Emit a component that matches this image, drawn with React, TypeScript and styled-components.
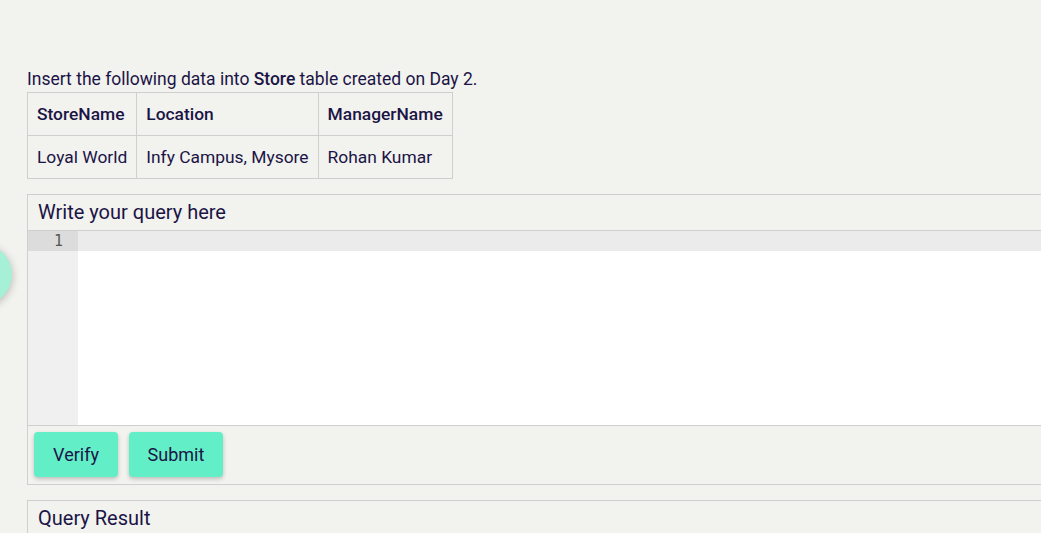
import React from "react";
import styled, {createGlobalStyle} from "styled-components";

const GlobalStyle = createGlobalStyle`
  html, body {
    margin: 0;
    padding: 0;
    background: #f2f2ee;
    overflow: hidden;
  }
  body {
    font-family: Roboto, "Liberation Sans", sans-serif;
    color: #1b1446;
  }
`

const Page = styled.div`
  position: relative;
  width: 1041px;
  height: 533px;
  overflow: hidden;
  padding: 67px 0 0 27px;
  box-sizing: border-box;
`

const FloatingBubble = styled.div`
  position: absolute;
  left: -49px;
  top: 244px;
  width: 61px;
  height: 61px;
  border-radius: 50%;
  background: #a6f0d8;
  box-shadow: 0 2px 8px rgba(0, 0, 0, 0.25);
`

const Intro = styled.p`
  margin: 0 0 1px;
  font-size: 17.5px;
  line-height: 24px;
  b {
    font-weight: 500;
  }
`

const DataTable = styled.table`
  border-collapse: collapse;
  font-size: 17.4px;
  margin-bottom: 15px;
  th, td {
    border: 1px solid #cfcfcf;
    padding: 0 9px;
    height: 42px;
    text-align: left;
  }
  th {
    font-weight: 500;
  }
`

const Panel = styled.section`
  width: 1100px;
  border: 1px solid #cfcfcf;
  box-sizing: border-box;
  margin-bottom: 15px;
`

const PanelTitle = styled.div`
  font-size: 20px;
  line-height: 35px;
  padding: 0 10px;
  border-bottom: 1px solid #cfcfcf;
`

const Editor = styled.div`
  display: flex;
  height: 194px;
  background: #fff;
`

const Gutter = styled.div`
  width: 50px;
  background: #f0f0f0;
  flex-shrink: 0;
`

const Lines = styled.div`
  flex: 1;
`

const LineNumber = styled.div<{active?: boolean}>`
  height: 20px;
  line-height: 20px;
  padding-right: 15px;
  text-align: right;
  font-family: "DejaVu Sans Mono", "Liberation Mono", monospace;
  font-size: 15px;
  color: #555;
  background: ${p => (p.active ? "#dcdcdc" : "transparent")};
`

const CodeLine = styled.div<{active?: boolean}>`
  height: 20px;
  background: ${p => (p.active ? "#ebebeb" : "transparent")};
`

const ButtonRow = styled.div`
  display: flex;
  gap: 11px;
  padding: 6px 6px 7px;
  border-top: 1px solid #cfcfcf;
`

const ActionButton = styled.button<{w: number}>`
  width: ${p => p.w}px;
  height: 45px;
  border: none;
  border-radius: 4px;
  background: #62efc8;
  color: #1b1446;
  font-family: Roboto, "Liberation Sans", sans-serif;
  font-size: 18px;
  box-shadow: 0 2px 4px rgba(0, 0, 0, 0.22);
  cursor: pointer;
`

const App = () => {
    return (
        <>
            <GlobalStyle />
            <Page>
                <FloatingBubble />
                <Intro>Insert the following data into <b>Store</b> table created on Day 2.</Intro>
                <DataTable>
                    <thead>
                        <tr>
                            <th>StoreName</th>
                            <th>Location</th>
                            <th>ManagerName</th>
                        </tr>
                    </thead>
                    <tbody>
                        <tr>
                            <td>Loyal World</td>
                            <td>Infy Campus, Mysore</td>
                            <td>Rohan Kumar</td>
                        </tr>
                    </tbody>
                </DataTable>
                <Panel>
                    <PanelTitle>Write your query here</PanelTitle>
                    <Editor>
                        <Gutter>
                            <LineNumber active>1</LineNumber>
                        </Gutter>
                        <Lines>
                            <CodeLine active />
                        </Lines>
                    </Editor>
                    <ButtonRow>
                        <ActionButton w={84}>Verify</ActionButton>
                        <ActionButton w={94}>Submit</ActionButton>
                    </ButtonRow>
                </Panel>
                <Panel>
                    <PanelTitle>Query Result</PanelTitle>
                </Panel>
            </Page>
        </>
    )
}

export default App;
